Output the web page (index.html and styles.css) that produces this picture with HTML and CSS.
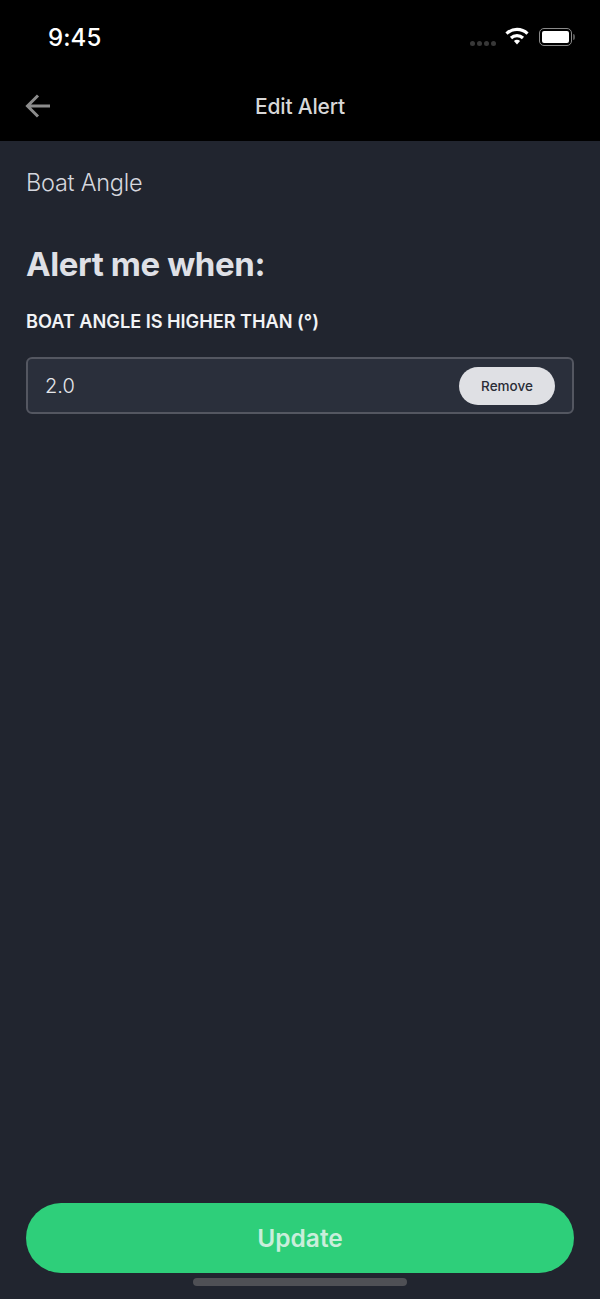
FILE: index.html
```html
<!DOCTYPE html>
<html lang="en">
<head>
    <meta charset="UTF-8">
    <meta name="viewport" content="width=device-width, initial-scale=1.0">
    <title>Edit Alert</title>
    <link rel="stylesheet" href="styles.css">
</head>
<body>
    <div class="screen">
        <div class="header">
            <div class="status">
                <span class="time">9:45</span>
                <div class="status_icons">
                    <div class="signal"><i></i><i></i><i></i><i></i></div>
                    <svg class="wifi" width="24" height="18" viewBox="0 0 24 18">
                        <path d="M1.5 6.6C7.4 1 16.6 1 22.5 6.6" fill="none" stroke="#fff" stroke-width="3.2"/>
                        <path d="M6 11C9.4 7.9 14.6 7.9 18 11" fill="none" stroke="#fff" stroke-width="3.2"/>
                        <path d="M8.9 14.1C10.8 12.4 13.2 12.4 15.1 14.1L12 17.4Z" fill="#fff"/>
                    </svg>
                    <div class="battery"><div class="battery_fill"></div></div>
                    <div class="battery_cap"></div>
                </div>
            </div>
            <div class="nav">
                <svg class="back" width="26" height="24" viewBox="0 0 26 24">
                    <path d="M25 12H3M13 1.5L2.5 12L13 22.5" fill="none" stroke="#8c8c8c" stroke-width="3"/>
                </svg>
                <span class="nav_title">Edit Alert</span>
            </div>
        </div>

        <div class="content">
            <p class="sensor">Boat Angle</p>
            <h1 class="title">Alert me when:</h1>
            <p class="label">BOAT ANGLE IS HIGHER THAN (°)</p>
            <div class="field">
                <span class="field_value">2.0</span>
                <button class="remove">Remove</button>
            </div>
        </div>

        <div class="footer">
            <button class="update">Update</button>
        </div>
        <div class="home_bar"></div>
    </div>
</body>
</html>
```
FILE: styles.css
```css
*{
    padding: 0;
    margin: 0;
    box-sizing: border-box;
}
body{
    background-color: #21252f;
    font-family: Inter, "Liberation Sans", sans-serif;
}
button{
    border: none;
    font-family: inherit;
}
.screen{
    width: 600px;
    height: 1299px;
    display: flex;
    flex-direction: column;
    position: relative;
    overflow: hidden;
}
.header{
    height: 141px;
    background-color: #000;
    flex-shrink: 0;
}
.status{
    height: 74px;
    display: flex;
    align-items: center;
    justify-content: space-between;
    padding: 0 25px 0 48px;
}
.time{
    font-size: 24px;
    font-weight: 500;
    color: #fff;
    letter-spacing: 0.1px;
}
.status_icons{
    display: flex;
    align-items: center;
}
.signal{
    display: flex;
    gap: 2px;
    margin-top: 12px;
    margin-right: 9px;
}
.signal i{
    width: 5px;
    height: 5px;
    border-radius: 50%;
    background-color: #383838;
}
.wifi{
    margin-right: 10px;
    margin-top: -3px;
}
.battery{
    width: 33px;
    height: 18px;
    border: 1.5px solid #8a8a8a;
    border-radius: 5px;
    padding: 2px;
}
.battery_fill{
    height: 100%;
    background-color: #fff;
    border-radius: 2px;
}
.battery_cap{
    width: 2px;
    height: 6px;
    margin-left: 1px;
    background-color: #555;
    border-radius: 0 2px 2px 0;
}
.nav{
    height: 64px;
    display: flex;
    align-items: center;
    justify-content: center;
    position: relative;
}
.back{
    position: absolute;
    left: 25px;
    top: 20px;
}
.nav_title{
    font-size: 21px;
    font-weight: 500;
    color: #d8d8d8;
    letter-spacing: -0.2px;
}
.content{
    flex: 1;
    padding: 0 26px;
}
.sensor{
    margin-top: 27px;
    font-size: 23.5px;
    line-height: 29px;
    font-weight: 300;
    color: #d5d7de;
    letter-spacing: -0.25px;
}
.title{
    margin-top: 46px;
    font-size: 33px;
    line-height: 42px;
    font-weight: 700;
    color: #dfe0e6;
    letter-spacing: -0.4px;
}
.label{
    margin-top: 26px;
    font-size: 18.2px;
    line-height: 20px;
    font-weight: 600;
    color: #f2f3f5;
    letter-spacing: -0.03px;
}
.field{
    margin-top: 26px;
    height: 57px;
    display: flex;
    align-items: center;
    justify-content: space-between;
    padding: 0 17px;
    background-color: #2a2f3b;
    border: 2px solid #545761;
    border-radius: 6px;
}
.field_value{
    font-size: 20px;
    font-weight: 300;
    color: #e4e6ea;
}
.remove{
    width: 96px;
    height: 38px;
    border-radius: 19px;
    background-color: #dfe0e4;
    color: #2a2d36;
    font-size: 13.5px;
    font-weight: 500;
}
.footer{
    padding: 0 26px 26px;
    flex-shrink: 0;
}
.update{
    display: block;
    width: 100%;
    height: 70px;
    border-radius: 35px;
    background-color: #2ecf7a;
    color: #c9eedb;
    font-size: 24.5px;
    font-weight: 600;
}
.home_bar{
    position: absolute;
    left: 193px;
    bottom: 13px;
    width: 214px;
    height: 8px;
    border-radius: 4px;
    background-color: #4f5055;
}
```
